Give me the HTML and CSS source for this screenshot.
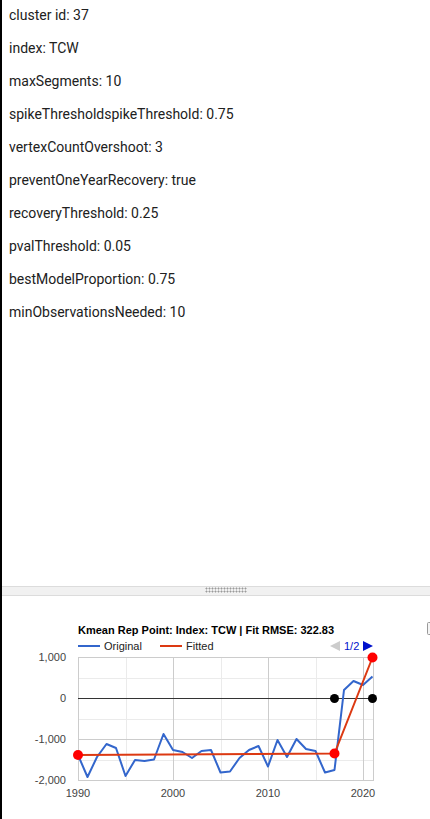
FILE: index.html
```html
<!DOCTYPE html>
<html>
<head>
  <meta charset="UTF-8">
  <title>Cluster Details</title>
  <link rel="stylesheet" href="styles.css">
</head>
<body>
  <div class="app">
    <div class="panel info">
      <p>cluster id: 37</p>
      <p>index: TCW</p>
      <p>maxSegments: 10</p>
      <p>spikeThresholdspikeThreshold: 0.75</p>
      <p>vertexCountOvershoot: 3</p>
      <p>preventOneYearRecovery: true</p>
      <p>recoveryThreshold: 0.25</p>
      <p>pvalThreshold: 0.05</p>
      <p>bestModelProportion: 0.75</p>
      <p>minObservationsNeeded: 10</p>
    </div>

    <div class="splitter"><div class="grip"></div></div>

    <div class="panel chart">
      <svg class="chart-svg" width="428" height="223" viewBox="2 596 428 223">
        <!-- title + legend -->
        <text class="title" x="78" y="634">Kmean Rep Point: Index: TCW | Fit RMSE: 322.83</text>
        <line x1="78" y1="646" x2="100" y2="646" stroke="#3366cc" stroke-width="2"/>
        <text class="lbl" x="104" y="650">Original</text>
        <line x1="160" y1="646" x2="182" y2="646" stroke="#dc3912" stroke-width="2"/>
        <text class="lbl" x="186" y="650">Fitted</text>
        <polygon points="340,641 340,651 330,646" fill="#ccc"/>
        <text class="page" x="344" y="650">1/2</text>
        <polygon points="363,641 363,651 373,646" fill="#0011cc"/>
        <rect x="427.5" y="622.5" width="6" height="12" rx="1" fill="#f4f4f4" stroke="#999"/>

        <!-- grid -->
        <g stroke="#ebebeb">
          <line x1="78" y1="678.5" x2="373" y2="678.5"/>
          <line x1="78" y1="719.5" x2="373" y2="719.5"/>
          <line x1="78" y1="760.5" x2="373" y2="760.5"/>
          <line x1="126.5" y1="657" x2="126.5" y2="780"/>
          <line x1="221.5" y1="657" x2="221.5" y2="780"/>
          <line x1="316.5" y1="657" x2="316.5" y2="780"/>
        </g>
        <g stroke="#cccccc">
          <line x1="78" y1="657.5" x2="374" y2="657.5"/>
          <line x1="78" y1="739.5" x2="374" y2="739.5"/>
          <line x1="78" y1="780.5" x2="374" y2="780.5"/>
          <line x1="78.5" y1="657" x2="78.5" y2="781"/>
          <line x1="173.5" y1="657" x2="173.5" y2="781"/>
          <line x1="268.5" y1="657" x2="268.5" y2="781"/>
          <line x1="363.5" y1="657" x2="363.5" y2="781"/>
          <line x1="373.5" y1="657" x2="373.5" y2="781"/>
        </g>
        <line x1="78" y1="698.5" x2="374" y2="698.5" stroke="#333"/>

        <!-- axis labels -->
        <g class="axis">
          <text x="66" y="661" text-anchor="end">1,000</text>
          <text x="66" y="702" text-anchor="end">0</text>
          <text x="66" y="743" text-anchor="end">-1,000</text>
          <text x="66" y="784" text-anchor="end">-2,000</text>
          <text x="78" y="797" text-anchor="middle">1990</text>
          <text x="173" y="797" text-anchor="middle">2000</text>
          <text x="268" y="797" text-anchor="middle">2010</text>
          <text x="363" y="797" text-anchor="middle">2020</text>
        </g>

        <!-- series -->
        <polyline fill="none" stroke="#3366cc" stroke-width="2" stroke-linejoin="round"
          points="78,755 87.5,777 97,757 106.5,744 116,748 125.5,776 135,760 144.5,761 154,759.5 163.5,734 173,750 182.5,752 192,758 201.5,751 211,750 220.5,772.5 230,771.5 239.5,758 249,750 258.5,746 268,766.5 277.5,740 287,757 296.5,739 306,749 315.5,751 325,772.5 334.5,770 344,690 353.5,681 363,685 372.5,676.5"/>
        <polyline fill="none" stroke="#dc3912" stroke-width="2"
          points="78,755 334.5,753.5 372.5,657.5"/>
        <circle cx="78" cy="755" r="5" fill="#ff0000"/>
        <circle cx="334.5" cy="753.5" r="5" fill="#ff0000"/>
        <circle cx="372.5" cy="657.5" r="5" fill="#ff0000"/>
        <circle cx="334.5" cy="698.5" r="4.5" fill="#000"/>
        <circle cx="372.5" cy="698.5" r="4.5" fill="#000"/>
      </svg>
    </div>
  </div>
</body>
</html>
```

FILE: styles.css
```css
body {
  margin: 0;
  background: #fff;
  font-family: Roboto, "Liberation Sans", sans-serif;
  overflow: hidden;
}
.app {
  display: flex;
  flex-direction: column;
  height: 819px;
  border-left: 2px solid #000;
}
.panel,
.splitter {
  flex-shrink: 0;
}
.info {
  height: 580px;
  padding: 6px 0 0 7px;
}
.info p {
  margin: 0 0 14px;
  font-size: 14px;
  line-height: 19px;
  color: #212121;
}
.splitter {
  height: 8px;
  background: #f1f1f1;
  border-top: 1px solid #dcdcdc;
  border-bottom: 1px solid #dcdcdc;
  padding-left: 203px;
}
.grip {
  width: 42px;
  height: 6px;
  background-image: radial-gradient(circle, #9a9a9a 0.9px, transparent 1.1px);
  background-size: 3px 3px;
}
.chart-svg {
  display: block;
}
.chart-svg text {
  font-family: "Liberation Sans", Arial, sans-serif;
  font-size: 11px;
}
.title {
  font-weight: bold;
  fill: #000;
}
.lbl {
  fill: #222;
}
.page {
  fill: #0011cc;
}
.axis text {
  fill: #444;
}
```
